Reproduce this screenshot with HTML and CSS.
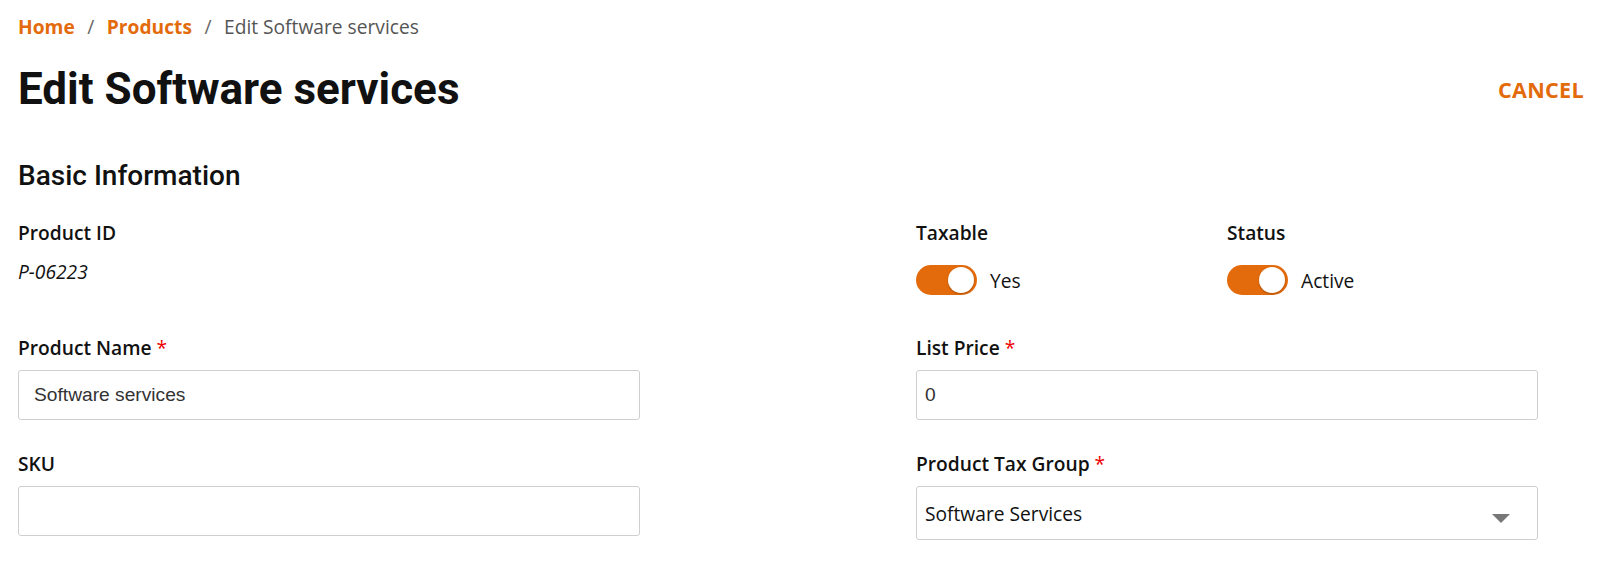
FILE: index.html
```html
<!DOCTYPE html>
<html>
<head>
<meta charset="utf-8">
<link rel="stylesheet" href="styles.css">
</head>
<body>
<div class="page">
  <nav class="crumbs">
    <a class="crumb-link">Home</a>
    <span class="sep">/</span>
    <a class="crumb-link">Products</a>
    <span class="sep">/</span>
    <span class="crumb-current">Edit Software services</span>
  </nav>
  <header class="head">
    <h1 class="title">Edit Software services</h1>
    <a class="cancel">CANCEL</a>
  </header>
  <h2 class="section">Basic Information</h2>
  <div class="form">
    <div class="field">
      <div class="label">Product ID</div>
      <div class="value">P-06223</div>
    </div>
    <div class="toggles">
      <div class="field">
        <div class="label">Taxable</div>
        <div class="toggle-row"><span class="switch"><span class="knob"></span></span><span class="toggle-text">Yes</span></div>
      </div>
      <div class="field">
        <div class="label">Status</div>
        <div class="toggle-row"><span class="switch"><span class="knob"></span></span><span class="toggle-text">Active</span></div>
      </div>
    </div>
    <div class="field">
      <div class="label">Product Name <span class="req">*</span></div>
      <div class="input">Software services</div>
    </div>
    <div class="field">
      <div class="label">List Price <span class="req">*</span></div>
      <div class="input narrow">0</div>
    </div>
    <div class="field">
      <div class="label">SKU</div>
      <div class="input"></div>
    </div>
    <div class="field">
      <div class="label">Product Tax Group <span class="req">*</span></div>
      <div class="select"><span>Software Services</span><span class="caret"></span></div>
    </div>
  </div>
</div>
</body>
</html>
```
FILE: styles.css
```css
html, body { margin: 0; padding: 0; background: #fff; }
body { font-family: "Open Sans", sans-serif; color: #111; }
.page { padding: 11px 16px 0 18px; }

.crumbs { display: flex; align-items: center; font-size: 19.2px; height: 30px; }
.crumb-link { color: #e36b0c; font-weight: 700; }
.sep { color: #666; margin: 0 12.5px; }
.crumb-current { color: #555; }

.head { display: flex; justify-content: space-between; align-items: center; margin-top: 21px; height: 54px; }
.title { font-family: Roboto, sans-serif; font-weight: 700; font-size: 44px; margin: 0; color: #111; }
.cancel { color: #e36b0c; font-weight: 700; font-size: 21.6px; letter-spacing: 0.3px; }

.section { font-family: Roboto, sans-serif; font-weight: 500; font-size: 28px; margin: 42px 0 0; height: 36px; line-height: 36px; color: #111; }

.form { display: grid; grid-template-columns: 622px 622px; column-gap: 276px; grid-template-rows: 115px 116px 116px; margin-top: 26px; }
.field { display: flex; flex-direction: column; }
.label { font-weight: 600; font-size: 19.2px; line-height: 26px; color: #111; }
.req { color: #e00; font-weight: 400; }
.value { font-style: italic; font-size: 19.2px; line-height: 26px; margin-top: 13px; color: #111; }

.toggles { display: grid; grid-template-columns: 1fr 1fr; }
.toggle-row { display: flex; align-items: center; margin-top: 19px; }
.switch { width: 61px; height: 30px; border-radius: 15px; background: #e36b0c; position: relative; display: inline-block; flex: none; }
.knob { position: absolute; right: 3px; top: 2px; width: 26px; height: 26px; border-radius: 50%; background: #fff; box-shadow: 0 1px 2px rgba(0,0,0,0.25); }
.toggle-text { margin-left: 13px; font-size: 19.2px; color: #111; }

.input { margin-top: 9px; box-sizing: border-box; height: 50px; border: 1px solid #cfcfcf; border-radius: 3px; padding: 0 15px; display: flex; align-items: center; font-family: "Liberation Sans", Arial, sans-serif; font-size: 19.2px; color: #333; }
.input.narrow { padding: 0 8px; }
.select { margin-top: 9px; height: 54px; box-sizing: border-box; border: 1px solid #cfcfcf; border-radius: 3px; padding: 0 27px 0 8px; display: flex; align-items: center; justify-content: space-between; font-size: 19.2px; color: #111; }
.caret { width: 0; height: 0; border-left: 9px solid transparent; border-right: 9px solid transparent; border-top: 9px solid #777; margin-top: 10px; }
```
